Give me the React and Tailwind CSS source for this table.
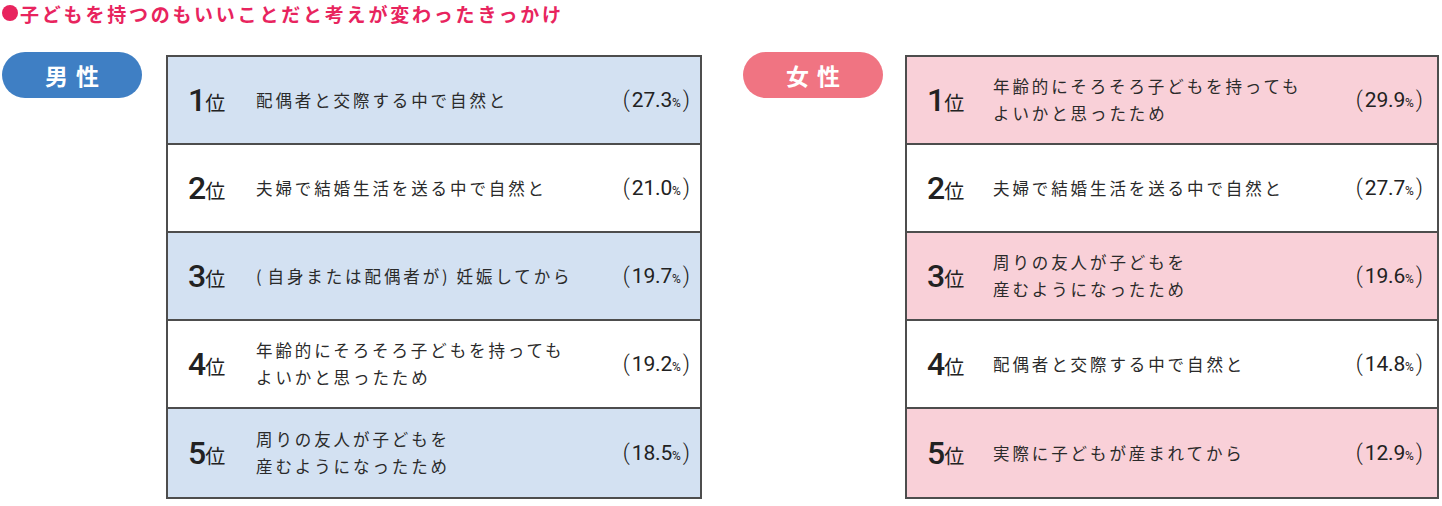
import React from "react";

const male = [
  { rank: 1, lines: ["配偶者と交際する中で自然と"], pct: "27.3" },
  { rank: 2, lines: ["夫婦で結婚生活を送る中で自然と"], pct: "21.0" },
  {
    rank: 3,
    lines: [
      <>
        <span className="mr-[3px]">(</span>自身または配偶者が<span className="mr-[6px]">)</span>妊娠してから
      </>,
    ],
    pct: "19.7",
  },
  { rank: 4, lines: ["年齢的にそろそろ子どもを持っても", "よいかと思ったため"], pct: "19.2" },
  { rank: 5, lines: ["周りの友人が子どもを", "産むようになったため"], pct: "18.5" },
];

const female = [
  { rank: 1, lines: ["年齢的にそろそろ子どもを持っても", "よいかと思ったため"], pct: "29.9" },
  { rank: 2, lines: ["夫婦で結婚生活を送る中で自然と"], pct: "27.7" },
  { rank: 3, lines: ["周りの友人が子どもを", "産むようになったため"], pct: "19.6" },
  { rank: 4, lines: ["配偶者と交際する中で自然と"], pct: "14.8" },
  { rank: 5, lines: ["実際に子どもが産まれてから"], pct: "12.9" },
];

const jp = { fontFamily: '"Noto Sans CJK JP", "Noto Sans", sans-serif' };
const num = { fontFamily: 'Roboto, "Noto Sans CJK JP", sans-serif' };

function Row({ item, tint, last, textLeft, pctRight }) {
  // odd ranks are tinted
  const bg = item.rank % 2 === 1 ? tint : "bg-white";
  return (
    <div
      className={`flex items-center h-[88px] ${bg} ${last ? "" : "border-b-2 border-[#4d4d4d]"}`}
    >
      <div className={`flex items-baseline pl-[20px] ${textLeft} shrink-0 text-[#222]`}>
        <span className="text-[32px] leading-none font-medium tracking-[-1px]" style={num}>
          {item.rank}
        </span>
        <span className="text-[20px] leading-none" style={jp}>位</span>
      </div>
      <div className="flex-1 text-[16.5px] leading-[27px] tracking-[2.9px] text-[#2a2a2a]" style={jp}>
        {item.lines.map((l, i) => (
          <div key={i}>{l}</div>
        ))}
      </div>
      <div className={`flex items-baseline text-[#222] ${pctRight}`} style={num}>
        <span className="text-[22px] font-light mr-[2px]">(</span>
        <span className="text-[21px] tracking-[-0.2px]">{item.pct}</span>
        <span className="text-[12px]">%</span>
        <span className="text-[22px] font-light ml-[2px]">)</span>
      </div>
    </div>
  );
}

function Panel({ label, pill, tint, data, width, gap, textLeft, pctRight }) {
  return (
    <div className="flex items-start">
      <div
        className={`w-[140px] h-[46px] rounded-full ${pill} flex items-center justify-center text-white text-[23px] font-bold tracking-[8px] pl-[8px] mt-[-3px]`}
        style={jp}
      >
        {label}
      </div>
      <div className={`${gap} ${width} border-2 border-[#4d4d4d] flex flex-col`}>
        {data.map((d, i) => (
          <Row
            key={d.rank}
            item={d}
            tint={tint}
            last={i === data.length - 1}
            textLeft={textLeft}
            pctRight={pctRight}
          />
        ))}
      </div>
    </div>
  );
}

export default function App() {
  return (
    <div className="w-[1442px] h-[506px] bg-white overflow-hidden">
      <div className="flex items-center h-[26px] pl-[2px]">
        <span className="w-[16px] h-[16px] rounded-full bg-[#e8245e] mr-[2px]"></span>
        <span
          className="text-[19px] font-bold tracking-[2.8px] text-[#e8245e] leading-none"
          style={jp}
        >
          子どもを持つのもいいことだと考えが変わったきっかけ
        </span>
      </div>
      <div className="flex mt-[29px] pl-[2px]">
        <Panel
          label="男性"
          pill="bg-[#3f7fc4]"
          tint="bg-[#d3e1f2]"
          data={male}
          width="w-[536px]"
          gap="ml-[24px]"
          textLeft="w-[88px]"
          pctRight="pr-[10px]"
        />
        <div className="w-[41px]"></div>
        <Panel
          label="女性"
          pill="bg-[#f07482]"
          tint="bg-[#f9d0d8]"
          data={female}
          width="w-[534px]"
          gap="ml-[22px]"
          textLeft="w-[86px]"
          pctRight="pr-[14px]"
        />
      </div>
    </div>
  );
}
